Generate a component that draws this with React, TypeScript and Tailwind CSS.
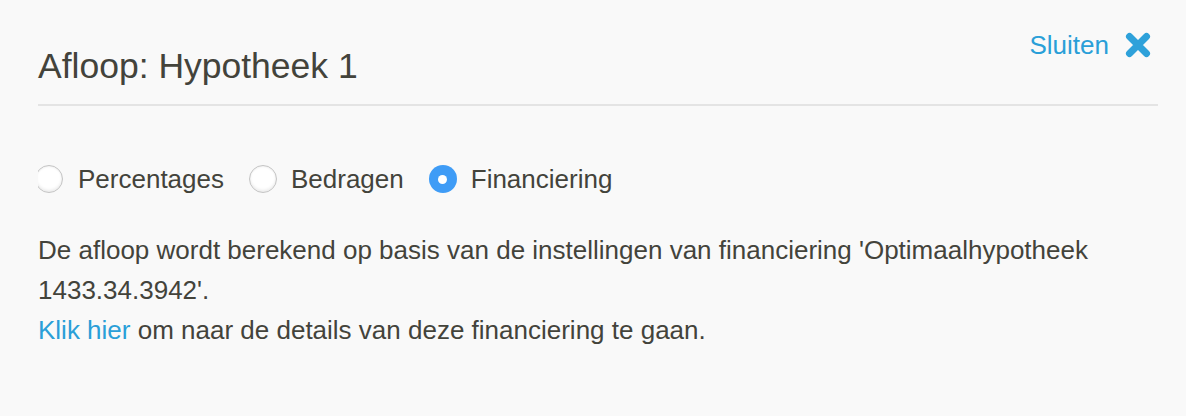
import React from "react";

function Radio({ checked }: { checked?: boolean }) {
  if (checked) {
    return (
      <span className="flex h-[28px] w-[28px] shrink-0 items-center justify-center rounded-full bg-[#3f9cf6]">
        <span className="h-[9px] w-[9px] rounded-full bg-white" />
      </span>
    );
  }
  return (
    <span className="block h-[28px] w-[28px] shrink-0 rounded-full border border-[#c4c4c4] bg-white shadow-[inset_0_-2px_3px_rgba(0,0,0,0.08),inset_0_1px_2px_rgba(0,0,0,0.06)]" />
  );
}

export default function App() {
  return (
    <div className="h-[416px] w-[1186px] bg-[#f9f9f9] pl-[38px] pr-[28px] font-['Liberation_Sans',Arial,sans-serif] text-[#43433b]">
      <div className="flex items-start justify-between">
        <h1 className="pt-[46px] text-[35.5px] leading-[40px] font-normal">Afloop: Hypotheek 1</h1>
        <button className="mt-[25px] mr-[6px] flex items-center gap-[15px] text-[26px] leading-[40px] text-[#2a9fd8]">
          <span>Sluiten</span>
          <svg width="28" height="28" viewBox="0 0 28 28">
            <path d="M5.5 5.5 L22.5 22.5 M22.5 5.5 L5.5 22.5" stroke="#2ea1da" strokeWidth="7" strokeLinecap="round" fill="none" />
          </svg>
        </button>
      </div>
      <div className="mt-[18px] h-[2px] bg-[#e4e4e4]" />
      <div className="mt-[53px] flex h-[40px] items-center overflow-hidden text-[26px]">
        <label className="ml-[-3px] mr-[25px] flex items-center gap-[15px]">
          <Radio />
          <span>Percentages</span>
        </label>
        <label className="mr-[25px] flex items-center gap-[14px]">
          <Radio />
          <span>Bedragen</span>
        </label>
        <label className="flex items-center gap-[14px]">
          <Radio checked />
          <span>Financiering</span>
        </label>
      </div>
      <div className="mt-[31px] text-[26px] leading-[40px]">
        <p>
          De afloop wordt berekend op basis van de instellingen van financiering 'Optimaalhypotheek 1433.34.3942'.
        </p>
        <p>
          <a className="text-[#2a9fd8]">Klik hier</a> om naar de details van deze financiering te gaan.
        </p>
      </div>
    </div>
  );
}
